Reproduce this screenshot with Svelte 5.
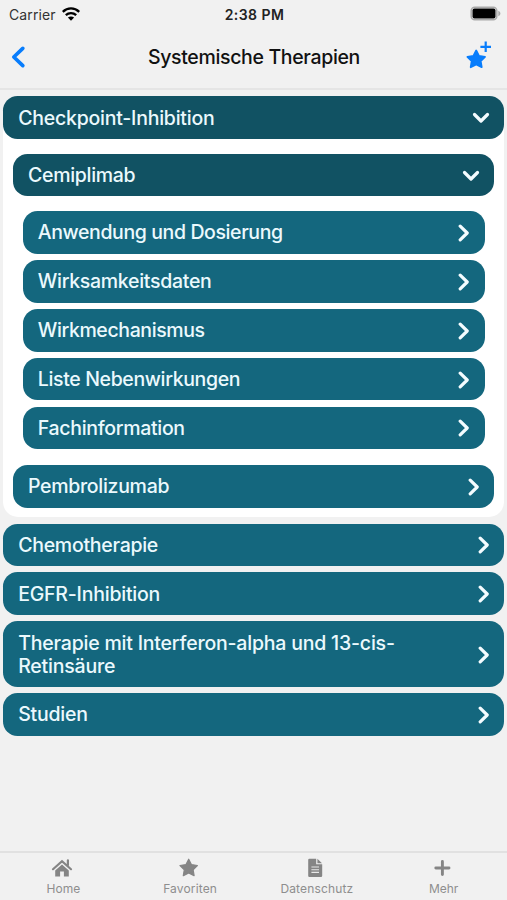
<script>
  const drugs = [
    {
      label: 'Cemiplimab', spacing: -0.3, open: true,
      children: [
        { label: 'Anwendung und Dosierung', spacing: -0.39 },
        { label: 'Wirksamkeitsdaten', spacing: -0.29 },
        { label: 'Wirkmechanismus', spacing: -0.39 },
        { label: 'Liste Nebenwirkungen', spacing: -0.36 },
        { label: 'Fachinformation', spacing: -0.31 }
      ]
    },
    { label: 'Pembrolizumab', spacing: -0.3, open: false, children: [] }
  ];
  const sections = [
    { label: 'Checkpoint-Inhibition', spacing: -0.23, open: true, children: drugs },
    { label: 'Chemotherapie', spacing: -0.27 },
    { label: 'EGFR-Inhibition', spacing: -0.22 },
    { label: 'Therapie mit Interferon-alpha und 13-cis-Retinsäure', spacing: -0.2 },
    { label: 'Studien', spacing: -0.22 }
  ];
</script>

{#snippet bar(item)}
  <button class="bar" class:open={item.open}>
    <span class="label" style="letter-spacing: {item.spacing}px">{item.label}</span>
    {#if item.open}
      <svg class="down" width="18" height="12" viewBox="0 0 18 12"><path d="M2.500 2.500 9 9l6.500-6.500" /></svg>
    {:else}
      <svg class="right" width="12" height="18" viewBox="0 0 12 18"><path d="M2.200 2.200 9.200 9l-7 6.800" /></svg>
    {/if}
  </button>
{/snippet}

<div class="screen">
  <div class="status">
    <div class="carrier">
      <span>Carrier</span>
      <svg width="18" height="14" viewBox="0 0 18 14">
        <g fill="none" stroke="#000" stroke-width="2.300">
          <path d="M.8 4.900C5.500.3 12.500.3 17.200 4.900" />
          <path d="M3.800 8.200c3-2.900 7.400-2.900 10.400 0" />
        </g>
        <path d="M9 13.700 5.900 10.600c1.700-1.600 4.500-1.600 6.200 0z" />
      </svg>
    </div>
    <span class="time">2:38 PM</span>
    <svg class="battery" width="32" height="16" viewBox="0 0 32 16">
      <rect x="1.200" y="1.200" width="25.600" height="12.600" rx="3.500" fill="#f1f1f1" stroke="#a9a9a9" stroke-width="1.500" />
      <rect x="2.500" y="2.600" width="23" height="9.800" rx="2" />
      <path d="M28.300 4.800c2.800 1 2.800 4.400 0 5.400z" fill="#a9a9a9" />
    </svg>
  </div>

  <header>
    <svg class="back" width="16" height="24" viewBox="0 0 16 24"><path d="M12.800 3.400 3.800 12l9 8.600" fill="none" stroke="#087dfc" stroke-width="3.700" stroke-linecap="round" stroke-linejoin="round" /></svg>
    <h1>Systemische Therapien</h1>
    <svg class="fav" width="26" height="30" viewBox="0 0 26 30">
      <path d="M10.200 10.500l2.800 5.400 6 .9-4.300 4.300 1 6.100-5.500-2.700-5.500 2.700 1-6.100-4.300-4.300 6-.9z" fill="#087dfc" stroke="#087dfc" stroke-width="1.800" stroke-linejoin="round" />
      <path d="M19.700 1.500v10.600M14.400 6.800H25" stroke="#087dfc" stroke-width="2.200" />
    </svg>
  </header>

  <main>
    {#each sections as section}
      {#if section.open}
        <section class="panel">
          {@render bar(section)}
          <div class="nest">
            {#each section.children as drug}
              <div class="drug">
                {@render bar(drug)}
                {#if drug.open}
                  <div class="nest leaves">
                    {#each drug.children as leaf}{@render bar(leaf)}{/each}
                  </div>
                {/if}
              </div>
            {/each}
          </div>
        </section>
      {:else}
        {@render bar(section)}
      {/if}
    {/each}
  </main>

  <nav>
    <div class="tab">
      <svg width="24" height="20" viewBox="0 0 24 20">
        <path d="M2 11.200 11 3.200l9 8M16.900 2.300v5" fill="none" stroke="#858585" stroke-width="2.200" stroke-linecap="round" />
        <path d="M4.200 12.600 11 6.600l6.800 6v5.900h-4.900v-4.900H9.100v4.900H4.200z" fill="#858585" />
      </svg>
      <span>Home</span>
    </div>
    <div class="tab">
      <svg width="24" height="20" viewBox="0 0 24 20"><path d="M10.700 1.200l2.700 5.400 6 .9-4.300 4.200 1 6-5.400-2.800-5.400 2.800 1-6L2 7.500l6-.9z" fill="#858585" stroke="#858585" stroke-width="1.200" stroke-linejoin="round" /></svg>
      <span class="fit">Favoriten</span>
    </div>
    <div class="tab">
      <svg width="24" height="20" viewBox="0 0 24 20">
        <path d="M3.200 2q0-1.200 1.200-1.200h6.800v5.500h6v11.500q0 1.200-1.200 1.200H4.400q-1.200 0-1.200-1.200zM12.400.8l4.600 4.400h-4.600z" fill="#858585" />
        <path d="M6.400 9h7.600M6.400 11.700h7.600M6.400 14.400h7.600" stroke="#e8e8e8" stroke-width="1.100" />
      </svg>
      <span class="fit">Datenschutz</span>
    </div>
    <div class="tab">
      <svg width="24" height="20" viewBox="0 0 24 20"><path d="M10.400 3.400v13.200M3.800 10h13.200" stroke="#858585" stroke-width="2.900" stroke-linecap="round" /></svg>
      <span>Mehr</span>
    </div>
  </nav>
</div>

<style>
  .screen {
    width: 507px;
    height: 900px;
    display: flex;
    flex-direction: column;
    overflow: hidden;
    background: #f1f1f1;
    color: #111;
    font-family: Inter, "Liberation Sans", sans-serif;
  }
  svg { display: block; flex: none; }
  .status {
    height: 28px;
    box-sizing: border-box;
    padding: 0 7px 0 9px;
    display: grid;
    grid-template-columns: 1fr auto 1fr;
    align-items: center;
    font-size: 14px;
  }
  .carrier { display: flex; align-items: center; gap: 6px; color: #333; letter-spacing: 0.1px; }
  .time { font-weight: 600; color: #222; letter-spacing: 0.45px; }
  .battery { justify-self: end; margin-right: -2px; }
  header {
    height: 62px;
    box-sizing: border-box;
    padding: 0 15px 2px 10px;
    border-bottom: 2px solid #e5e5e5;
    display: grid;
    grid-template-columns: 1fr auto 1fr;
    align-items: center;
  }
  h1 {
    margin: 0 -3px 0 3px;
    font-size: 19.500px;
    line-height: 24px;
    font-weight: 500;
    letter-spacing: -0.34px;
  }
  .back { margin-bottom: 1px; }
  .fav { justify-self: end; margin-bottom: 4px; }
  main {
    flex: 1;
    padding: 6.400px 2.800px 0 3.200px;
    display: flex;
    flex-direction: column;
    gap: 6.200px;
  }
  .bar {
    width: 100%;
    min-height: 42.700px;
    box-sizing: border-box;
    padding: 10.300px 15px 9.300px;
    border: 0;
    border-radius: 14.500px;
    display: flex;
    align-items: center;
    justify-content: space-between;
    background: #14677e;
    color: #ebf9fd;
    font: 500 19.500px/23px Inter, "Liberation Sans", sans-serif;
    text-align: left;
  }
  .bar.open { background: #115263; }
  .label { max-width: 400px; }
  .bar path {
    fill: none;
    stroke: #f4fcff;
    stroke-width: 3.200;
    stroke-linecap: round;
    stroke-linejoin: round;
  }
  .down { margin-right: -1px; }
  .right { margin-right: -0.500px; }
  .panel { background: #fff; border-radius: 15px; }
  .nest {
    padding: 14.700px 9.800px 9.600px;
    display: flex;
    flex-direction: column;
    gap: 15.800px;
  }
  .leaves { gap: 6.200px; padding-bottom: 0; }
  nav {
    height: 49px;
    box-sizing: border-box;
    border-top: 2px solid #e1e1e1;
    display: flex;
    color: #8e8e8e;
    font-size: 12px;
  }
  .tab {
    flex: 1;
    padding-top: 5px;
    display: flex;
    flex-direction: column;
    align-items: center;
    gap: 3px;
    line-height: 15px;
  }
  .fit { letter-spacing: 0.15px; }
</style>
